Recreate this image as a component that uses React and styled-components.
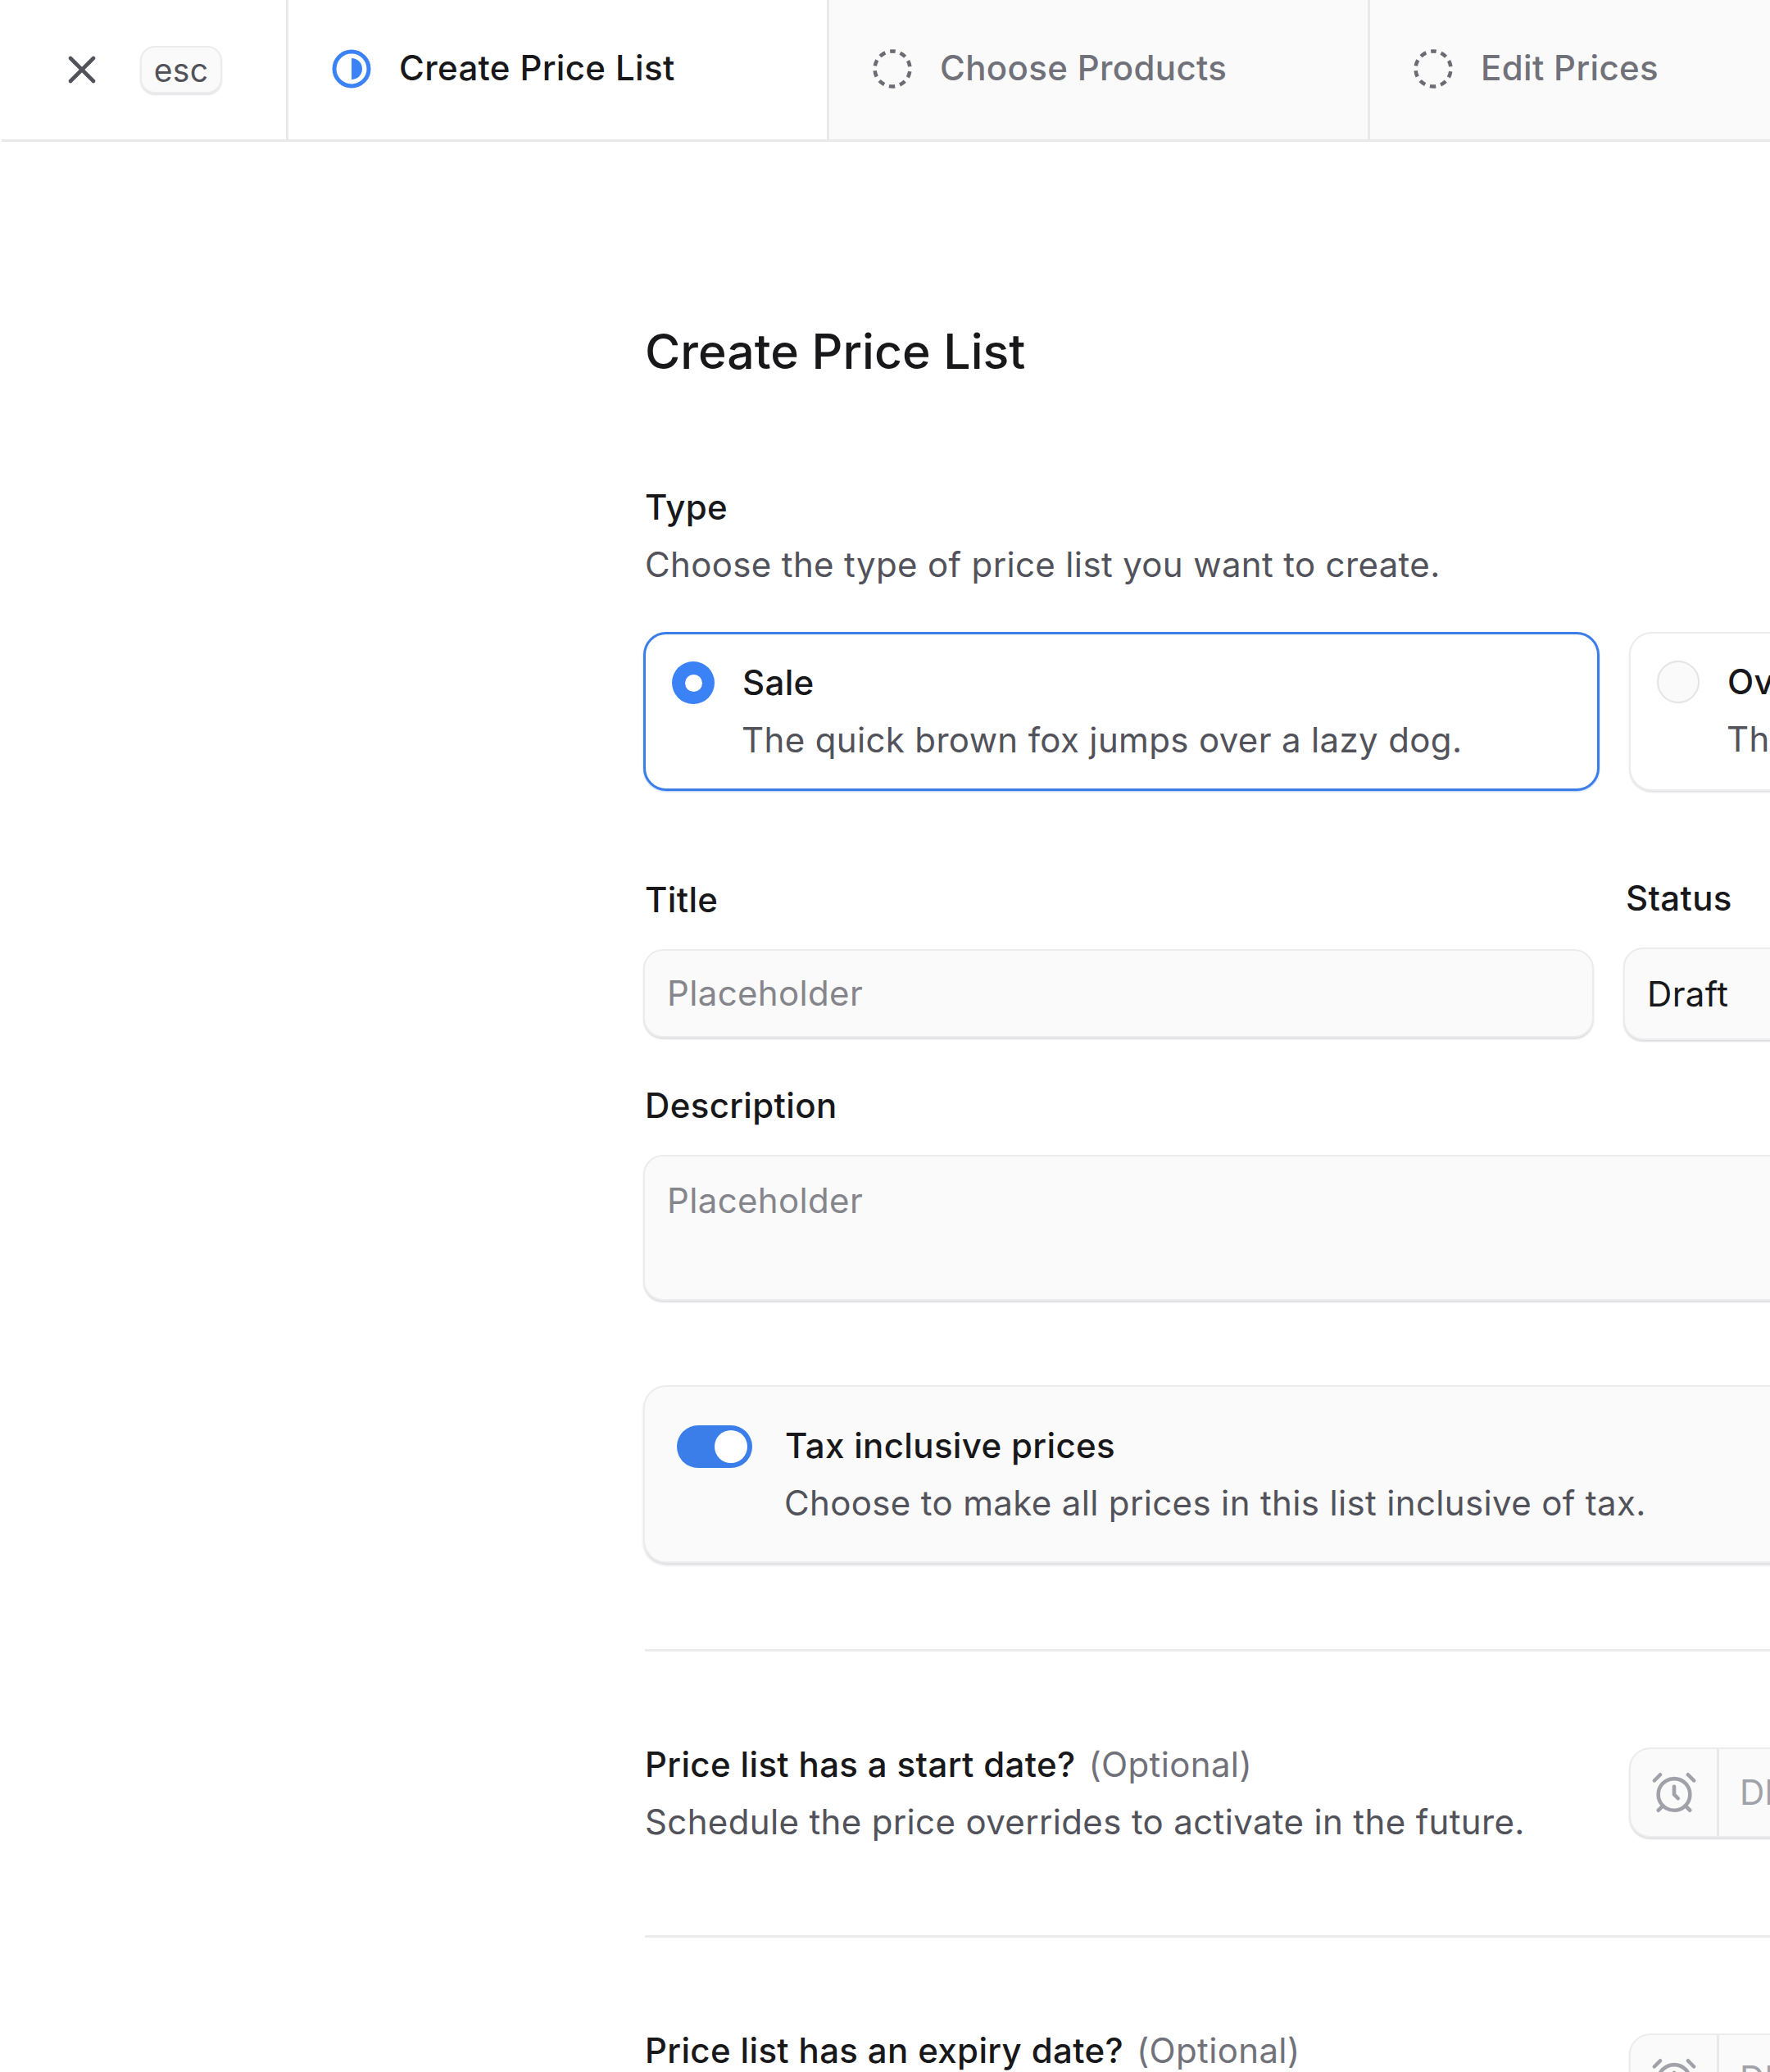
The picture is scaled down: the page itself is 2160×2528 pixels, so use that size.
import React from 'react'
import styled, { createGlobalStyle } from 'styled-components'
import { X, AlarmClock } from 'lucide-react'

const GlobalStyle = createGlobalStyle`
  * { box-sizing: border-box; }
  html, body { margin: 0; padding: 0; background: #fff; }
  body { font-family: Inter, "Liberation Sans", sans-serif; color: #18181b; }
`

const Page = styled.div`
  width: 2160px;
  height: 2528px;
  overflow: hidden;
  background: #fff;
`

const Header = styled.header`
  display: flex;
  height: 173px;
  margin-left: 2px;
  border-bottom: 3px solid #e9e9eb;
`

const CloseBox = styled.div`
  display: flex;
  align-items: center;
  width: 350px;
  padding-left: 70px;
  border-right: 3px solid #e9e9eb;
  color: #52525b;
  gap: 43px;
`

const Kbd = styled.span`
  display: flex;
  align-items: center;
  justify-content: center;
  width: 100px;
  height: 58px;
  border: 2px solid #ececee;
  border-radius: 18px;
  background: #fafafa;
  box-shadow: 0 2px 2px #e4e4e7;
  font-size: 39px;
  letter-spacing: 0.3px;
  color: #52525b;
`

const Tab = styled.div`
  display: flex;
  align-items: center;
  flex: ${p => (p.$last ? 1 : 'none')};
  width: 660px;
  gap: 34px;
  padding-left: 53px;
  padding-bottom: 2px;
  border-right: ${p => (p.$last ? 'none' : '3px solid #e9e9eb')};
  background: ${p => (p.$active ? '#fff' : '#fafafa')};
  color: ${p => (p.$active ? '#18181b' : '#71717a')};
  font-size: 42px;
  letter-spacing: 0.35px;
  font-weight: 500;
`

const TabLabel = styled.span`
  margin-top: -3px;
`

const Main = styled.main`
  width: 2375px;
  margin-left: 785px;
  padding-top: 221px;
`

const PageTitle = styled.h1`
  margin: 0 0 120px;
  padding-left: 2px;
  font-size: 59px;
  font-weight: 500;
  line-height: 70px;
`

const Label = styled.div`
  padding-left: ${p => p.$inset || 2}px;
  font-size: 42px;
  letter-spacing: 0.35px;
  font-weight: 500;
  line-height: ${p => p.$lh || 70}px;
  color: #18181b;
  white-space: nowrap;
`

const Hint = styled.div`
  padding-left: ${p => p.$inset ?? 2}px;
  font-size: 42px;
  letter-spacing: 0.35px;
  line-height: 70px;
  color: #52525b;
  white-space: nowrap;
`

const Optional = styled.span`
  margin-left: 16px;
  font-weight: 400;
  color: #71717a;
`

const CardRow = styled.div`
  display: grid;
  grid-template-columns: 1167px 1167px;
  gap: 36px;
  margin-top: 47px;
`

const Card = styled.div`
  display: flex;
  gap: 33px;
  height: 194px;
  padding: 24px 0 0 32px;
  border-radius: 28px;
  background: #fff;
  border: ${p => (p.$selected ? '3px solid #3b7de9' : '2px solid #ececee')};
  box-shadow: ${p => (p.$selected ? '0 1px 2px #a8c4f2' : '0 2px 2px #e4e4e7')};
  overflow: hidden;
`

const Radio = styled.span`
  display: flex;
  align-items: center;
  justify-content: center;
  flex: none;
  width: 52px;
  height: 52px;
  margin-top: 9px;
  border-radius: 50%;
  background: ${p => (p.$on ? '#3b82f6' : '#fafafa')};
  border: ${p => (p.$on ? 'none' : '2px solid #e4e4e7')};

  &::after {
    content: '';
    display: ${p => (p.$on ? 'block' : 'none')};
    width: 21px;
    height: 21px;
    border-radius: 50%;
    background: #fff;
  }
`

const FieldRow = styled.div`
  display: grid;
  grid-template-columns: 1160px 1179px;
  gap: 36px;
  align-items: start;
  margin-top: 106px;
`

const FieldColumn = styled.div`
  padding-top: ${p => p.$offset || 0}px;
`

const Input = styled.div`
  display: flex;
  align-items: ${p => (p.$multiline ? 'flex-start' : 'center')};
  height: ${p => p.$height || 108}px;
  margin-top: 35px;
  padding: ${p => (p.$multiline ? '29px' : '0')} 27px 0;
  border: 2px solid #ececee;
  border-radius: 24px;
  background: #fafafa;
  box-shadow: 0 2px 2px #dedee0;
  font-size: 42px;
  letter-spacing: 0.35px;
  line-height: 50px;
  color: ${p => (p.$filled ? '#18181b' : '#85858c')};
`

const DescriptionField = styled.div`
  margin-top: 55px;
`

const ToggleCard = styled.div`
  display: flex;
  gap: 39px;
  height: 217px;
  margin: 103px 0 105px;
  padding: 37px 0 0 39px;
  border: 2px solid #ececee;
  border-radius: 28px;
  background: #fafafa;
  box-shadow: 0 3px 3px #e0e0e2;
`

const Toggle = styled.span`
  display: flex;
  align-items: center;
  justify-content: flex-end;
  flex: none;
  width: 92px;
  height: 52px;
  margin-top: 10px;
  padding-right: 6px;
  border-radius: 26px;
  background: #3b7de9;

  &::after {
    content: '';
    width: 40px;
    height: 40px;
    border-radius: 50%;
    background: #fff;
  }
`

const Separator = styled.hr`
  margin: 0 0 0 2px;
  border: none;
  border-top: 3px solid #ececee;
`

const DateSection = styled.div`
  display: grid;
  grid-template-columns: 1167px 1167px;
  gap: 36px;
  align-items: center;
  padding: 103px 0;
`

const DatePicker = styled.div`
  display: flex;
  height: 110px;
  margin-bottom: 3px;
  border: 2px solid #ececee;
  border-radius: 26px;
  background: #fafafa;
  box-shadow: 0 2px 2px #dedee0;
  font-size: 42px;
  color: #a1a1aa;
`

const DateIcon = styled.div`
  display: flex;
  align-items: center;
  justify-content: center;
  width: 108px;
  border-right: 3px solid #e9e9eb;
`

const DateText = styled.div`
  display: flex;
  align-items: center;
  padding-left: 25px;
`

function HalfCircle() {
  return (
    <svg width="48" height="48" viewBox="0 0 48 48">
      <circle cx="24" cy="24" r="21" fill="none" stroke="#3b82f6" strokeWidth="5" />
      <path d="M24 11a13 13 0 0 1 0 26z" fill="#3b82f6" />
    </svg>
  )
}

function DashedCircle() {
  return (
    <svg width="48" height="48" viewBox="0 0 48 48">
      <circle cx="24" cy="24" r="21.5" fill="none" stroke="#6b6b73" strokeWidth="4.5" strokeDasharray="7.5 6" strokeDashoffset="3.7" transform="rotate(-90 24 24)" />
    </svg>
  )
}

function DateField({ title, hint }) {
  return (
    <DateSection>
      <div>
        <Label>{title}<Optional>(Optional)</Optional></Label>
        <Hint>{hint}</Hint>
      </div>
      <DatePicker>
        <DateIcon><AlarmClock size={58} strokeWidth={1.9} color="#a1a1aa" /></DateIcon>
        <DateText>DD/MM/YYYY</DateText>
      </DatePicker>
    </DateSection>
  )
}

export default function App() {
  return (
    <Page>
      <GlobalStyle />
      <Header>
        <CloseBox>
          <X size={56} strokeWidth={2} />
          <Kbd>esc</Kbd>
        </CloseBox>
        <Tab $active><HalfCircle /><TabLabel>Create Price List</TabLabel></Tab>
        <Tab><DashedCircle /><TabLabel>Choose Products</TabLabel></Tab>
        <Tab $last><DashedCircle /><TabLabel>Edit Prices</TabLabel></Tab>
      </Header>

      <Main>
        <PageTitle>Create Price List</PageTitle>

        <Label>Type</Label>
        <Hint>Choose the type of price list you want to create.</Hint>

        <CardRow>
          <Card $selected>
            <Radio $on />
            <div>
              <Label $inset={1}>Sale</Label>
              <Hint $inset={0}>The quick brown fox jumps over a lazy dog.</Hint>
            </div>
          </Card>
          <Card>
            <Radio />
            <div>
              <Label $inset={1}>Override</Label>
              <Hint $inset={0}>The quick brown fox jumps over a lazy dog.</Hint>
            </div>
          </Card>
        </CardRow>

        <FieldRow>
          <FieldColumn $offset={2}>
            <Label $lh={50}>Title</Label>
            <Input>Placeholder</Input>
          </FieldColumn>
          <FieldColumn>
            <Label $lh={50} $inset={3}>Status</Label>
            <Input $filled $height={113}>Draft</Input>
          </FieldColumn>
        </FieldRow>

        <DescriptionField>
          <Label $lh={50}>Description</Label>
          <Input $multiline $height={178}>Placeholder</Input>
        </DescriptionField>

        <ToggleCard>
          <Toggle />
          <div>
            <Label $inset={1}>Tax inclusive prices</Label>
            <Hint $inset={0}>Choose to make all prices in this list inclusive of tax.</Hint>
          </div>
        </ToggleCard>

        <Separator />
        <DateField title="Price list has a start date?" hint="Schedule the price overrides to activate in the future." />
        <Separator />
        <DateField title="Price list has an expiry date?" hint="Schedule the price overrides to deactivate in the future." />
      </Main>
    </Page>
  )
}
